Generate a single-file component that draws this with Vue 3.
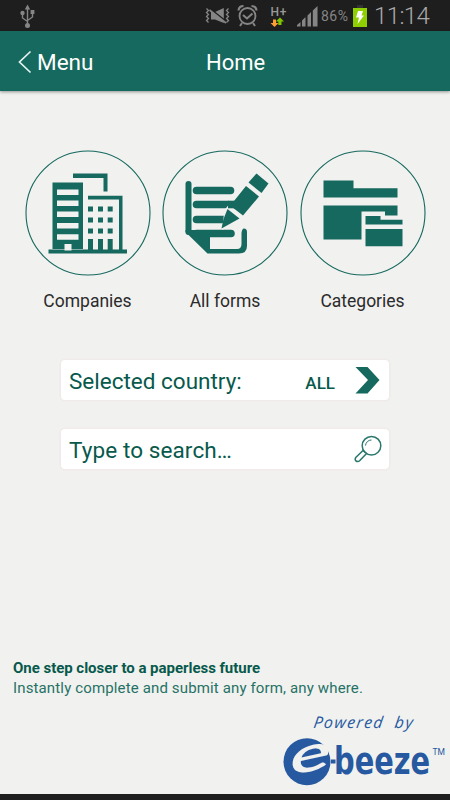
<script setup>
import { ref } from "vue"

const time = ref("11:14")
const battery = ref(86)
const country = ref("ALL")

const dots = [87.5, 97.5, 107.2]
</script>

<template>
  <div class="screen">
    <div class="status">
      <svg class="usb" width="18" height="26" viewBox="0 0 18 26" fill="none" stroke="#858585" stroke-width="1.4">
        <path d="M8.500 5V22M3.500 11V15L8.500 18.500M13.500 10V14L8.500 17.500" />
        <path d="M5.800 6.500L8.500 1.500L11.200 6.500Z" fill="#858585" stroke="none" />
        <circle cx="3.500" cy="10" r="2.200" fill="#858585" stroke="none" />
        <rect x="11.600" y="7" width="3.800" height="4" fill="#858585" stroke="none" />
        <circle cx="8.500" cy="22.500" r="2.500" fill="#858585" stroke="none" />
      </svg>
      <svg class="tray" width="118" height="31" viewBox="202 0 118 31" fill="none" stroke="#858585">
        <path d="M206.500 8.500l2 2-2 2 2 2-2 2 2 2-2 2 2 2" stroke-width="1.300" />
        <path d="M228.500 8.500l-2 2 2 2-2 2 2 2-2 2 2 2-2 2" stroke-width="1.300" />
        <path d="M211 12H215L223.800 8V23L215 19.500H211Z" fill="#858585" stroke="none" />
        <path d="M209 8L226 21.500" stroke="#1e1e1e" stroke-width="1.800" />
        <path d="M209.500 10L226 23" stroke-width="1.600" />
        <circle cx="247.500" cy="16" r="8" stroke-width="1.800" />
        <path d="M243 15L247 18.500L252.500 13.500" stroke-width="2" />
        <path d="M238.500 10.500Q239 6 243.500 6M256.500 10.500Q256 6 251.500 6" stroke-width="2.200" />
        <path d="M242 23L240 26M253 23L255 26" stroke-width="2" />
        <path d="M273 19.500H276V23H278.500L274.500 27L270.500 23H273Z" fill="#ff9f32" stroke="none" />
        <path d="M278.300 25V21.500H275.800L280 17.500L284 21.500H281.500V25Z" fill="#80c600" stroke="none" />
        <text x="270.500" y="15.500" class="hplus" textLength="16">H+</text>
        <path d="M297 26.500V25L300.500 22V26.500ZM302 26.500V20.500L305.500 17V26.500ZM307.500 26.500V15.500L311 12V26.500ZM312.800 26.500V10.500L317.500 6V26.500Z" fill="#858585" stroke="none" />
      </svg>
      <span class="percent">{{ battery }}%</span>
      <svg class="battery" width="16" height="24" viewBox="0 0 16 24">
        <path d="M5 1H11V4H5Z" fill="#333" />
        <path d="M1 4H15V23H1Z" fill="#8fce00" />
        <path d="M6 7H11L9.500 11.500H12L5.500 20L7 13.500H4Z" fill="#fff" />
      </svg>
      <span class="clock">{{ time }}</span>
    </div>

    <header class="header">
      <button class="back">
        <svg width="14" height="24" viewBox="0 0 14 24" fill="none" stroke="#e4f3ef" stroke-width="1.700">
          <path d="M12.500 1.500L1.500 12L12.500 22.500" />
        </svg>
        <span>Menu</span>
      </button>
      <h1>Home</h1>
    </header>

    <main class="main">
      <nav class="tiles">
        <a class="tile">
          <svg width="126" height="126" viewBox="0 0 126 126">
            <circle class="ring" cx="63" cy="63" r="62" />
            <g fill="#16695e">
              <path d="M48 23.500H82.500V41.500H78.500V28H48Z" />
              <path d="M27.500 32.500H58V99H27.500Z" />
              <path d="M63 45.700H97.500V100H94V49.500H63Z" />
              <path d="M23.500 99.500H102V103.500H23.500Z" />
              <g v-for="x in dots" :key="x">
                <rect :x="x - 24.500" y="56.500" width="5" height="5" />
                <rect :x="x - 24.500" y="67.500" width="5" height="5" />
                <rect :x="x - 24.500" y="78.500" width="5" height="5" />
                <rect :x="x - 24.500" y="89" width="5" height="11" />
              </g>
            </g>
            <path fill="#f1f1ef" d="M32 39.500H53.500V45H32ZM32 50.500H53.500V56H32ZM32 61.500H53.500V67H32ZM32 73H53.500V78.500H32ZM32 84.300H53.500V89.800H32ZM39.500 94H46.500V100.500H39.500Z" />
          </svg>
          <span class="label">Companies</span>
        </a>

        <a class="tile">
          <svg width="126" height="126" viewBox="0 0 126 126">
            <circle class="ring" cx="63" cy="63" r="62" />
            <path d="M26.500 34V82" class="thick" stroke-width="6" />
            <path d="M34.500 40.500H68.500M34.500 54.500H66M34.500 69.500H62M34.500 83.500H69" class="thick" stroke-width="7.600" />
            <path d="M23.500 80H48V99H75Q79.500 99 79.500 94V83Q80 78.500 82 78.500Q85 78.500 85 82V96Q85 103.500 77 103.500H45.500L23.500 82Z" fill="#16695e" />
            <path d="M62.500 60L83.500 34L98.500 45.500L77 71L60 80Z" fill="#f1f1ef" />
            <path d="M66 50.700H73V58.300H66Z" fill="#16695e" />
            <path d="M70 53.500L84 36L97 46.500L81 65.500L68 55.500Z" fill="#16695e" />
            <path d="M94.500 23.500L106.500 33.500L99.500 43L86.500 32.500Z" fill="#16695e" />
            <path d="M65.500 59L77.500 68.500L59.500 78.500L61.500 69Z" fill="#16695e" />
          </svg>
          <span class="label">All forms</span>
        </a>

        <a class="tile">
          <svg width="126" height="126" viewBox="0 0 126 126">
            <circle class="ring" cx="63" cy="63" r="62" />
            <path fill="#16695e" d="M23.500 30.500H53.500V38.300H97.500V47.500H23.500Z" />
            <path fill="#16695e" d="M23.500 55.500H97.500V65.500H85V61.500H61.500V89.500H23.500Z" />
            <path fill="#16695e" d="M65.500 66H80.500V69.700H102.500V74.500H65.500ZM65.500 79H102.500V96.300H65.500Z" />
          </svg>
          <span class="label">Categories</span>
        </a>
      </nav>

      <div class="field">
        <span class="selected">Selected country:</span>
        <b class="value">{{ country }}</b>
        <svg width="26" height="28" viewBox="0 0 26 28">
          <path fill="#16695e" d="M0.500 1H12.500L24.500 14L12.500 27.500H0.500L13 14Z" />
        </svg>
      </div>

      <div class="field search">
        <span class="placeholder">Type to search…</span>
        <svg width="28" height="28" viewBox="0 0 28 28" fill="none" stroke="#2a776d" stroke-width="1.500">
          <circle cx="17.500" cy="10.700" r="9.300" />
          <path d="M11.500 10.500A6 6 0 0 1 17.500 5" stroke-width="1" />
          <path d="M9 15.500L1.800 22.500Q0.500 24.500 2 26Q4 27.300 5.600 25.800L12.500 18.500Z" />
        </svg>
      </div>
    </main>

    <footer class="footer">
      <strong class="tagline">One step closer to a paperless future</strong>
      <p class="note">Instantly complete and submit any form, any where.</p>
      <svg class="brand" width="170" height="85" viewBox="280 709 170 85">
        <text class="powered" transform="translate(313 728) skewX(-8)"><tspan textLength="69">Powered</tspan><tspan x="81" textLength="18">by</tspan></text>
        <circle cx="307" cy="761.700" r="23.500" fill="#26599f" />
        <text class="mark" transform="translate(288 776) rotate(-12) skewX(-20) scale(1.600 1)">e</text>
        <rect x="331" y="759.500" width="4.500" height="4" fill="#26599f" />
        <text class="name" transform="translate(334 774) scale(0.780 1)">beeze</text>
        <text class="tm" x="432.500" y="755">TM</text>
      </svg>
    </footer>
  </div>
</template>

<style>
body {
  margin: 0;
  background: #f1f1ef;
}
</style>

<style scoped>
.screen {
  display: flex;
  flex-direction: column;
  width: 450px;
  height: 800px;
  box-sizing: border-box;
  border-bottom: 6px solid #1e1e1e;
  background: #f1f1ef;
  font-family: Roboto, sans-serif;
  color: #07594c;
  overflow: hidden;
}
.status {
  display: flex;
  align-items: center;
  height: 31px;
  background: #1e1e1e;
  color: #858585;
}
.usb {
  margin: 0 0 0 19px;
}
.tray {
  margin-left: 165px;
}
.hplus {
  font: 500 12px Roboto, sans-serif;
  fill: #999;
  stroke: none;
}
.percent {
  width: 30px;
  margin-left: 1px;
  font-size: 14px;
  letter-spacing: 0.5px;
}
.battery {
  margin-left: 1px;
}
.clock {
  margin-left: 6px;
  font-size: 24px;
  font-weight: 300;
  letter-spacing: -0.6px;
  color: #aaa;
}
.header {
  display: grid;
  grid-template-columns: 206px 1fr;
  align-items: center;
  height: 60px;
  flex: none;
  background: #16695e;
  color: #fff;
  box-shadow: 0 1px 3px rgba(0, 0, 0, 0.4);
}
.back {
  display: flex;
  align-items: center;
  gap: 5px;
  padding: 2px 0 0 18px;
  border: 0;
  background: none;
  color: inherit;
  font: 22.5px Roboto, sans-serif;
}
.header h1 {
  margin: 0;
  padding-top: 2px;
  font-size: 22px;
  font-weight: 400;
}
.main {
  display: flex;
  flex-direction: column;
  flex: 1;
  align-items: center;
  padding-top: 59px;
}
.tiles {
  display: flex;
  gap: 11.5px;
  height: 210px;
}
.tile {
  display: flex;
  flex-direction: column;
  align-items: center;
  width: 126px;
}
.ring {
  fill: none;
  stroke: #16695e;
  stroke-width: 1.1;
}
.thick {
  fill: none;
  stroke: #16695e;
  stroke-linecap: round;
}
.label {
  margin-top: 14px;
  font-size: 17.5px;
  line-height: 22px;
  color: #2b2b2b;
  white-space: nowrap;
}
.field {
  display: flex;
  align-items: center;
  width: 328px;
  height: 40px;
  padding: 0 8px;
  box-sizing: border-box;
  border-radius: 4px;
  background: #fff;
  box-shadow: 0 0 0 1.5px #f0eae9;
  font-size: 22.5px;
}
.field span {
  flex: 1;
  padding-top: 2px;
}
.value {
  margin-right: 20px;
  padding-top: 5px;
  font-size: 17px;
  font-weight: 500;
}
.search {
  margin-top: 29px;
  padding-right: 7px;
}
.search .placeholder {
  letter-spacing: 0.1px;
}
.footer {
  padding-left: 13px;
}
.tagline {
  display: block;
  font-size: 15px;
  line-height: 20px;
  font-weight: 700;
  letter-spacing: -0.03px;
}
.note {
  margin: 0;
  font-size: 15px;
  line-height: 21px;
  letter-spacing: 0.14px;
  color: #267166;
}
.brand {
  display: block;
  margin: 10px 0 0 267px;
}
.powered {
  font: italic 500 16px "Open Sans", sans-serif;
  fill: #26599f;
}
.mark {
  font: 600 49px Lato, sans-serif;
  fill: #f1f1ef;
}
.name {
  font: bold 37px "DejaVu Sans", sans-serif;
  fill: #26599f;
}
.tm {
  font: 8.5px Roboto, sans-serif;
  fill: #26599f;
}
</style>
